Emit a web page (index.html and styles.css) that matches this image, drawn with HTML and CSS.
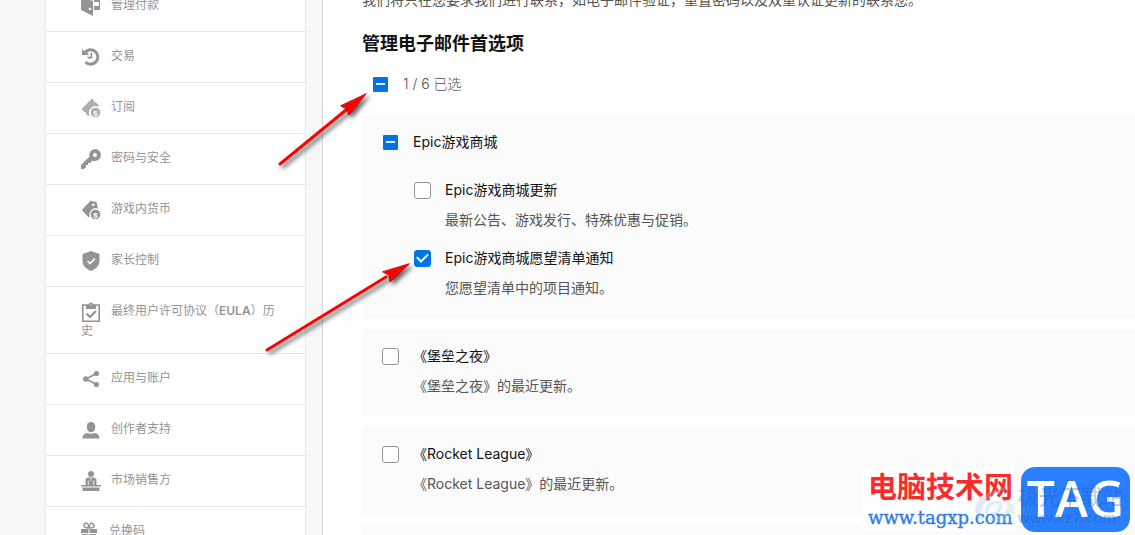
FILE: index.html
```
<!DOCTYPE html>
<html lang="zh-CN">
<head>
<meta charset="utf-8">
<title>管理电子邮件首选项</title>
<link rel="stylesheet" href="styles.css">
</head>
<body>
<div class="page">
  <nav class="sidebar">
    <a class="nav-item" href="#"><svg class="icon" viewBox="0 0 20 20"><path d="M0 1 12 5v15L0 14zM3 0h16v14h-6V4zM13 6h5v4h-5z" fill-rule="evenodd"/><circle cx="9" cy="13" r="1.3" fill="#fff"/><path d="M13 9h4" stroke="#fff"/></svg>管理付款</a>
    <a class="nav-item" href="#"><svg class="icon" viewBox="0 0 20 20"><path d="M4 5.5A7.2 7.2 0 1 1 4.5 15" fill="none" stroke="currentColor" stroke-width="3"/><path d="M1 1.5V8h6.5V6.3L3 4zM9.500 5.500h1.700v6H6.500V9.800h3z"/></svg>交易</a>
    <a class="nav-item nav-item-light" href="#"><svg class="icon" viewBox="0 0 20 20"><path d="M.5 11 11 .5l1.800 1.800q-.3 2.200 2 2L18 7.500l-1 1A6.500 6.500 0 0 0 8.500 17l-1.500 1-1.800-1.800q.5-2.200-1.700-2.200z"/><circle cx="14.500" cy="14.500" r="4.800"/><text class="coin" x="14.500" y="17.500" text-anchor="middle">$</text></svg>订阅</a>
    <a class="nav-item" href="#"><svg class="icon" viewBox="0 0 20 20"><path fill-rule="evenodd" d="M14 0a6 6 0 1 1-2.500 11.500L9 14H7v2H5v2l-2 2H0v-4l8.500-8.500A6 6 0 0 1 14 0zm0 4a2 2 0 1 0 0 4 2 2 0 0 0 0-4z"/></svg>密码与安全</a>
    <a class="nav-item" href="#"><svg class="icon" viewBox="0 0 20 20"><path fill-rule="evenodd" d="M.8 10 9.500.8l6 1.200 1.500 6.500A6.500 6.500 0 0 0 8.700 16.500l-1 1zM12.300 3.500a1.300 1.300 0 1 0 0 2.600 1.300 1.300 0 0 0 0-2.600z"/><circle cx="14.500" cy="14.500" r="4.800"/><text class="coin" x="14.500" y="17.500" text-anchor="middle">$</text></svg>游戏内货币</a>
    <a class="nav-item" href="#"><svg class="icon" viewBox="0 0 20 20"><path d="M10 0 18.500 3v7c0 5-4 8-8.500 10-4.500-2-8.500-5-8.500-10V3z"/><path d="m6.500 10 2.500 2.500L14 7.500" fill="none" stroke="#fff" stroke-width="1.700"/></svg>家长控制</a>
    <a class="nav-item" href="#"><svg class="icon" viewBox="0 0 20 20"><path d="M1.800 3h16.400v16.200H1.800z" fill="none" stroke="currentColor" stroke-width="1.600"/><path fill-rule="evenodd" d="M5 3h2.500a2.500 2.500 0 0 1 5 0H15v4H5zm5-1.300a1.200 1.200 0 1 0 0 2.400 1.200 1.200 0 0 0 0-2.400z"/><path d="m5.500 11.500 3.500 3.500 6-6" fill="none" stroke="currentColor" stroke-width="2.200"/></svg>最终用户许可协议（<b>EULA</b>）历史</a>
    <a class="nav-item" href="#"><svg class="icon" viewBox="0 0 20 20"><path d="M15.500 4.500 5 10l10.500 5.500" fill="none" stroke="currentColor" stroke-width="1.700"/><circle cx="15.500" cy="4.500" r="2.600"/><circle cx="4.800" cy="10" r="2.800"/><circle cx="15.500" cy="15.500" r="2.600"/></svg>应用与账户</a>
    <a class="nav-item" href="#"><svg class="icon" viewBox="0 0 20 20"><ellipse cx="10" cy="7" rx="4.300" ry="5.200"/><path d="M1.500 18.500q0-5 5-5.500 3.500 1.500 7 0 5 .5 5 5.500z"/></svg>创作者支持</a>
    <a class="nav-item" href="#"><svg class="icon" viewBox="0 0 20 20"><circle cx="10" cy="3" r="3"/><path d="M4.500 14V9q0-2 3-2.500h5q3 .5 3 2.500v5H20v1.500H0V14zM1.500 16.500h17V20h-17z"/><path d="M7.300 9.500V14M12.700 9.500V14M10 7v3" stroke="#fff" stroke-width=".8"/></svg>市场销售方</a>
    <a class="nav-item nav-item-gift" href="#"><svg class="icon" viewBox="0 0 16 20"><path d="M0 7h7.500v4H0zM8.500 7H16v4H8.500zM1 12h6.500v7H1zM8.500 12H15v7H8.500z"/><path d="M8 6Q3 6 3 3.500T5.500 1Q7 1 8 6q1-5 2.500-5T13 3.500 8 6z" fill="none" stroke="currentColor" stroke-width="1.600"/></svg>兑换码</a>
  </nav>

  <main class="content">
    <p class="intro">我们将只在您要求我们进行联系，如电子邮件验证，重置密码以及双重认证更新的联系您。</p>
    <h1 class="title">管理电子邮件首选项</h1>
    <div class="option summary">
      <input class="check partial" type="checkbox" id="all" aria-checked="mixed">
      <label for="all">1 / 6 已选</label>
    </div>

    <section class="card">
      <div class="option">
        <input class="check partial" type="checkbox" id="store" aria-checked="mixed">
        <label for="store">Epic游戏商城</label>
      </div>
      <div class="nested">
        <div class="option">
          <input class="check" type="checkbox" id="store-news">
          <label for="store-news">Epic游戏商城更新</label>
          <p class="hint">最新公告、游戏发行、特殊优惠与促销。</p>
        </div>
        <div class="option">
          <input class="check" type="checkbox" id="wishlist" checked>
          <label for="wishlist">Epic游戏商城愿望清单通知</label>
          <p class="hint">您愿望清单中的项目通知。</p>
        </div>
      </div>
    </section>

    <section class="card">
      <div class="option">
        <input class="check" type="checkbox" id="fortnite">
        <label for="fortnite">《堡垒之夜》</label>
        <p class="hint">《堡垒之夜》的最近更新。</p>
      </div>
    </section>

    <section class="card">
      <div class="option">
        <input class="check" type="checkbox" id="rocket">
        <label for="rocket">《Rocket League》</label>
        <p class="hint">《Rocket League》的最近更新。</p>
      </div>
    </section>

    <section class="card"></section>
  </main>
</div>

<svg class="arrows" width="440" height="380" viewBox="0 0 440 380" aria-hidden="true">
  <g class="arrow"><path d="M280 164 346 110"/><path class="head" d="M366 94 349 115 347 109 341 106z"/></g>
  <g class="arrow"><path d="M267 350 386 277"/><path class="head" d="M409 264 390 282 389 275 383 272z"/></g>
</svg>

<div class="stamp">
  <div class="stamp-text">
    <div class="stamp-name">电脑技术网</div>
    <div class="stamp-url">www.tagxp.com</div>
  </div>
  <div class="tag">TAG</div>
  <div class="ghost">
    <svg class="ghost-logo" viewBox="0 0 42 38"><path fill="#8fbcf0" d="M41 1C20 0 1 12 1 24q0 8 8 10Q3 23 15 13 25 4 41 1z"/><path fill="#a9dcae" d="M12 34q22 6 28-8 2-8-8-11 4 10-7 15-6 3-13 4z"/><path fill="none" stroke="#8fbcf0" stroke-width="3" d="M13 28q-1-11 9-12 7 1 4 7t-9 4"/></svg>
    <div class="ghost-text"><div class="ghost-name">极光下载站</div><div class="ghost-url">www.xz7.com</div></div>
  </div>
</div>
</body>
</html>
```
FILE: styles.css
```
* { box-sizing: border-box; }
body {
  margin: 0;
  height: 100vh;
  overflow: hidden;
  position: relative;
  background: #f7f7f7;
  color: #121212;
  font: 14px/20px Inter, "Noto Sans CJK SC", sans-serif;
}
p, h1 { margin: 0; }

.page {
  display: flex;
  align-items: stretch;
  height: 100%;
  overflow: hidden;
  padding-left: 45px;
}

/* Account menu */
.sidebar {
  flex: 0 0 261px;
  align-self: flex-start;
  margin: -19px 16px 0 0;
  background: #fff;
  border: 1px solid #e7e7e7;
  border-top: 0;
}
.nav-item {
  display: block;
  min-height: 51px;
  padding: 14px 30px 12px 35px;
  border-bottom: 1px solid #e7e7e7;
  color: #949494;
  font-size: 12px;
  text-decoration: none;
}
.nav-item b { font-weight: 600; }
.icon {
  width: 20px;
  height: 20px;
  margin: -4px 10px -4px 0;
  vertical-align: middle;
  fill: currentColor;
}
.nav-item-light .icon { opacity: .75; }
.nav-item-gift .icon { width: 16px; margin-right: 12px; }
.coin { font: bold 8px "Liberation Sans", sans-serif; fill: #fff; }

/* Preferences */
.content {
  flex: 1;
  min-width: 0;
  margin-top: -10px;
  padding-left: 39px;
  background: #fff;
  border-left: 1px solid #d8d8d8;
}
.intro { color: #555; }
.title {
  margin: 22px 0 18px;
  font-size: 18px;
  line-height: 24px;
  font-weight: 700;
}
.option {
  display: grid;
  grid-template-columns: 17px 1fr;
  column-gap: 14px;
  row-gap: 10px;
  align-items: center;
}
.summary {
  margin-bottom: 21px;
  padding-left: 10px;
  color: #505050;
  font-weight: 300;
}
.card {
  min-height: 60px;
  margin-bottom: 10px;
  padding: 17px 20px 21px;
  background: #fbfbfb;
}
.nested {
  display: grid;
  gap: 18px;
  margin-top: 28px;
  padding-left: 32px;
}
.hint { grid-column: 2; color: #555; }

.check {
  appearance: none;
  display: grid;
  place-items: center;
  width: 17px;
  height: 17px;
  margin: 0;
  background: #fff;
  border: 1px solid #949494;
  border-radius: 3px;
}
.check:checked { background: #0074e4; border-color: #0074e4; }
.check:checked::after {
  content: "";
  width: 9px;
  height: 5px;
  margin-top: -3px;
  border: solid #fff;
  border-width: 0 0 2px 2px;
  transform: rotate(-45deg);
}
.check.partial {
  width: 15px;
  height: 15px;
  margin-left: 1px;
  background: #0074e4;
  border: 0;
  border-radius: 1px;
}
.check.partial::after {
  content: "";
  width: 9px;
  height: 2px;
  background: #e4f0fc;
}

/* Pointer arrows over the page */
.arrows { position: absolute; left: 0; top: 0; pointer-events: none; }
.arrow {
  fill: #f00;
  stroke: #f00;
  stroke-width: 3;
  stroke-linecap: round;
  filter: drop-shadow(3px 3px 2px rgba(0, 0, 0, .6));
}
.arrow .head { stroke: #c00; stroke-width: 1; }

/* Site stamp in the corner */
.stamp {
  position: absolute;
  right: 5px;
  bottom: 3px;
  display: flex;
  gap: 8px;
}
.stamp-text {
  width: 151px;
  padding-left: 6px;
  background: #fff;
  white-space: nowrap;
}
.stamp-name {
  color: #fb2b2b;
  font: 700 29px/36px "Noto Sans CJK SC", sans-serif;
}
.stamp-url {
  color: #2f7de8;
  font: 400 18px/29px "DejaVu Serif", serif;
  -webkit-text-stroke: 0.4px #2f7de8;
}
.tag {
  width: 109px;
  height: 65px;
  border-radius: 14px;
  background: #2b7fff;
  color: #fff;
  font: 600 50px/62px "Open Sans", sans-serif;
  text-align: center;
}
.ghost {
  position: absolute;
  right: 7px;
  top: 17px;
  display: flex;
  align-items: center;
  gap: 2px;
  opacity: .3;
  white-space: nowrap;
}
.ghost-logo { width: 42px; height: 38px; }
.ghost-text { color: #1c5ca8; }
.ghost-name { font-size: 21px; line-height: 26px; font-weight: 500; }
.ghost-url { font: 700 15px/16px "Liberation Sans", sans-serif; }
```
